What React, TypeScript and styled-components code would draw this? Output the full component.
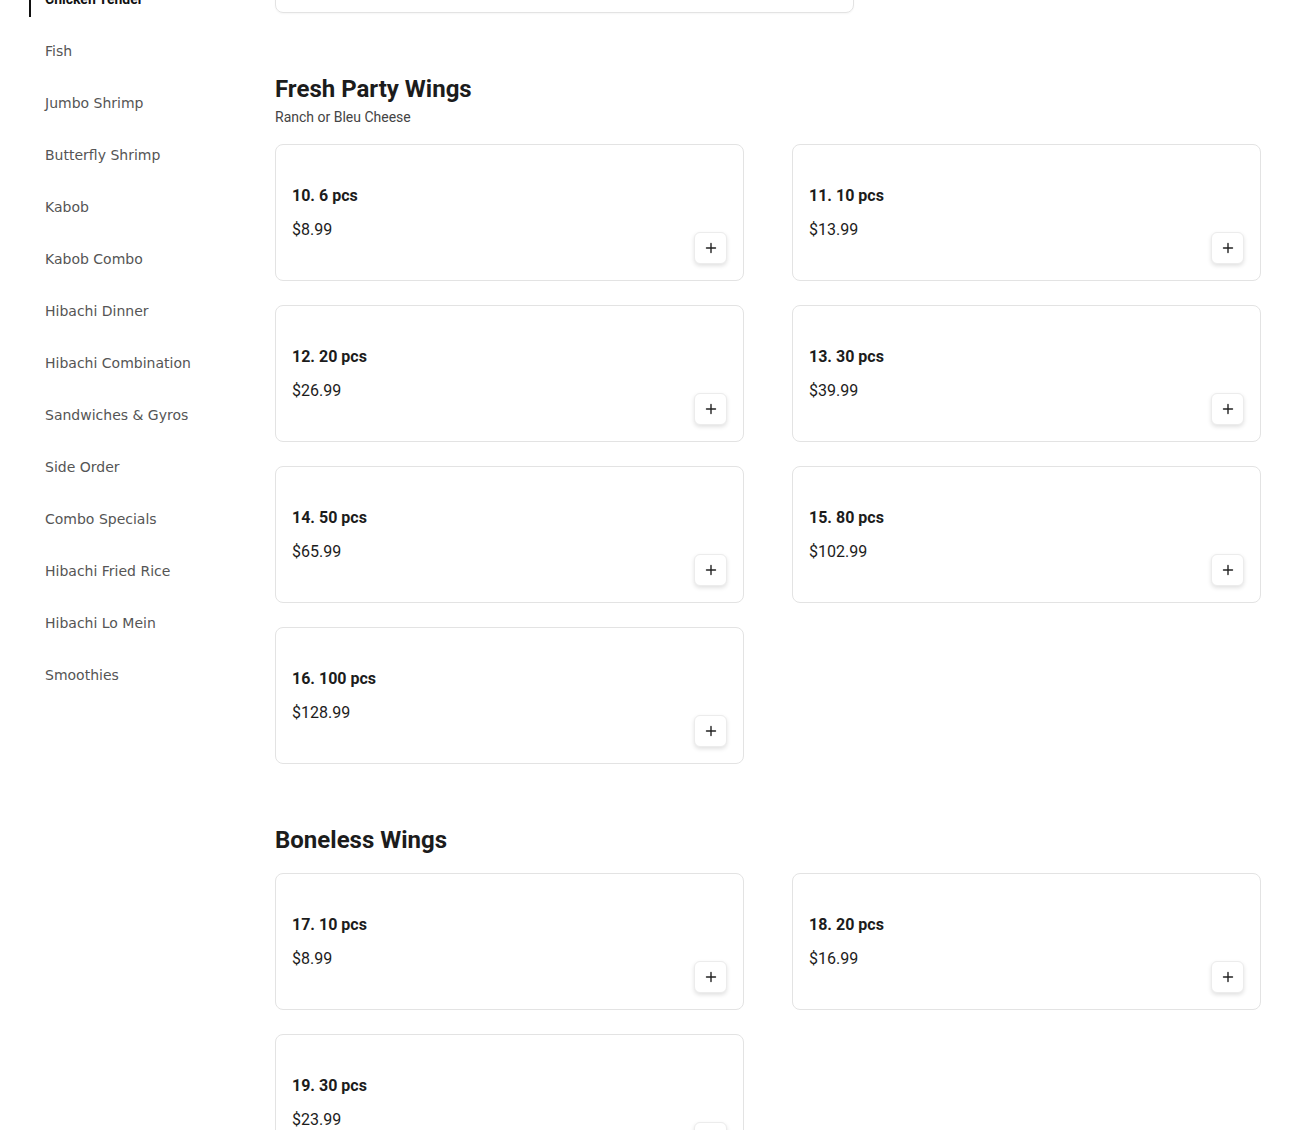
import React from "react";
import styled, { createGlobalStyle } from "styled-components";

const GlobalStyle = createGlobalStyle`
  * { box-sizing: border-box; }
  body {
    margin: 0;
    background: #ffffff;
    font-family: "DejaVu Sans", sans-serif;
  }
`;

type Item = { name: string; price: string };
type Section = { title: string; note?: string; items: Item[] };

const categories = [
  "Chicken Tender",
  "Fish",
  "Jumbo Shrimp",
  "Butterfly Shrimp",
  "Kabob",
  "Kabob Combo",
  "Hibachi Dinner",
  "Hibachi Combination",
  "Sandwiches & Gyros",
  "Side Order",
  "Combo Specials",
  "Hibachi Fried Rice",
  "Hibachi Lo Mein",
  "Smoothies",
];

const sections: Section[] = [
  {
    title: "Fresh Party Wings",
    note: "Ranch or Bleu Cheese",
    items: [
      { name: "10. 6 pcs", price: "$8.99" },
      { name: "11. 10 pcs", price: "$13.99" },
      { name: "12. 20 pcs", price: "$26.99" },
      { name: "13. 30 pcs", price: "$39.99" },
      { name: "14. 50 pcs", price: "$65.99" },
      { name: "15. 80 pcs", price: "$102.99" },
      { name: "16. 100 pcs", price: "$128.99" },
    ],
  },
  {
    title: "Boneless Wings",
    items: [
      { name: "17. 10 pcs", price: "$8.99" },
      { name: "18. 20 pcs", price: "$16.99" },
      { name: "19. 30 pcs", price: "$23.99" },
    ],
  },
];

// page is shown scrolled; the viewport clips what lies above and below
const Viewport = styled.div`
  height: 1130px;
  overflow: hidden;
  display: flex;
  align-items: flex-start;
  padding: 0 30px 0 29px;
`;

//-------------Sidebar--------------------

const Sidebar = styled.nav`
  width: 246px;
  flex-shrink: 0;
`;

const CategoryList = styled.ul`
  list-style: none;
  margin: -19px 0 0 0;
  padding: 0;
  display: flex;
  flex-direction: column;
  gap: 16px;
`;

const Category = styled.li<{ $active?: boolean }>`
  height: 36px;
  flex-shrink: 0;
  display: flex;
  align-items: center;
  padding-left: 14px;
  border-left: 2px solid ${(p) => (p.$active ? "#111111" : "transparent")};
  font-size: 14px;
  font-weight: ${(p) => (p.$active ? 700 : 400)};
  color: ${(p) => (p.$active ? "#111111" : "#555555")};
  font-family: ${(p) => (p.$active ? "Roboto, sans-serif" : '"DejaVu Sans", sans-serif')};
  cursor: pointer;
`;

//-------------Menu--------------------

const Main = styled.main`
  flex: 1;
  display: flex;
  flex-direction: column;
  gap: 60px;
  font-family: Roboto, "Liberation Sans", sans-serif;
  color: #1c1c1c;
`;

const PrevTail = styled.div`
  flex-shrink: 0;
  width: 579px;
  height: 137px;
  margin-top: -124px;
  border: 1px solid #e3e3e3;
  border-radius: 8px;
  box-shadow: 0 1px 2px rgba(0, 0, 0, 0.04);
`;

const SectionBlock = styled.section`
  flex-shrink: 0;
  display: flex;
  flex-direction: column;
`;

const SectionHead = styled.header`
  display: flex;
  flex-direction: column;
  gap: 2px;
  margin-bottom: 17px;
`;

const SectionTitle = styled.h2`
  margin: 0;
  font-size: 24px;
  line-height: 32px;
  font-weight: 700;
  color: #1c1c1c;
`;

const SectionNote = styled.p`
  margin: 0;
  font-size: 14px;
  line-height: 20px;
  color: #444444;
`;

const Grid = styled.div`
  display: grid;
  grid-template-columns: 469px 469px;
  column-gap: 48px;
  row-gap: 24px;
`;

const Card = styled.div`
  height: 137px;
  border: 1px solid #e3e3e3;
  border-radius: 8px;
  padding: 16px;
  display: flex;
  justify-content: space-between;
  align-items: flex-end;
  background: #fff;
`;

const CardText = styled.div`
  align-self: flex-start;
  padding-top: 23px;
  display: flex;
  flex-direction: column;
  gap: 10px;
`;

const ItemName = styled.div`
  font-size: 16px;
  line-height: 24px;
  font-weight: 700;
  color: #1c1c1c;
`;

const ItemPrice = styled.div`
  font-size: 16px;
  line-height: 24px;
  color: #1c1c1c;
`;

const AddBtn = styled.button`
  width: 33px;
  height: 32px;
  border: 1px solid #ececec;
  border-radius: 6px;
  background: #fff;
  box-shadow: 0 2px 4px rgba(0, 0, 0, 0.12);
  display: flex;
  align-items: center;
  justify-content: center;
  padding: 0;
  cursor: pointer;
`;

const PlusIcon = () => (
  <svg width="12" height="12" viewBox="0 0 12 12" fill="none">
    <path d="M6 1.5v9M1.5 6h9" stroke="#222" strokeWidth="1.4" strokeLinecap="round" />
  </svg>
);

export default function App() {
  return (
    <>
      <GlobalStyle />
      <Viewport>
        <Sidebar>
          <CategoryList>
            {categories.map((c, i) => (
              <Category key={c} $active={i === 0}>
                {c}
              </Category>
            ))}
          </CategoryList>
        </Sidebar>
        <Main>
          <PrevTail />
          {sections.map((s) => (
            <SectionBlock key={s.title}>
              <SectionHead>
                <SectionTitle>{s.title}</SectionTitle>
                {s.note && <SectionNote>{s.note}</SectionNote>}
              </SectionHead>
              <Grid>
                {s.items.map((it) => (
                  <Card key={it.name}>
                    <CardText>
                      <ItemName>{it.name}</ItemName>
                      <ItemPrice>{it.price}</ItemPrice>
                    </CardText>
                    <AddBtn aria-label={`Add ${it.name}`}>
                      <PlusIcon />
                    </AddBtn>
                  </Card>
                ))}
              </Grid>
            </SectionBlock>
          ))}
        </Main>
      </Viewport>
    </>
  );
}
